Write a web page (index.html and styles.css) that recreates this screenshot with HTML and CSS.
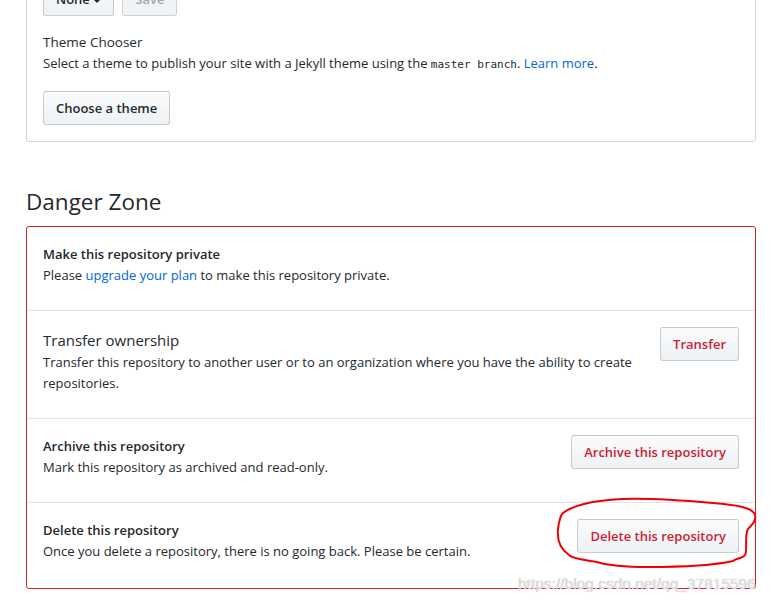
FILE: index.html
```html
<!DOCTYPE html>
<html>
<head>
<meta charset="utf-8">
<link rel="stylesheet" href="styles.css">
</head>
<body>
<div class="page">
  <div class="box">
    <div class="btn-row">
      <button class="btn">None <span class="caret"></span></button>
      <button class="btn btn-disabled">Save</button>
    </div>
    <div class="chooser-title">Theme Chooser</div>
    <p class="chooser-desc">Select a theme to publish your site with a Jekyll theme using the <code>master branch</code>. <a href="#">Learn more</a>.</p>
    <button class="btn btn-theme">Choose a theme</button>
  </div>

  <h2 class="danger-heading">Danger Zone</h2>
  <div class="danger-box">
    <div class="row">
      <div class="row-text">
        <div class="row-title">Make this repository private</div>
        <p class="row-desc">Please <a href="#">upgrade your plan</a> to make this repository private.</p>
      </div>
    </div>
    <div class="row">
      <div class="row-text">
        <div class="row-title row-title-lg">Transfer ownership</div>
        <p class="row-desc">Transfer this repository to another user or to an organization where you have the ability to create repositories.</p>
      </div>
      <button class="btn btn-danger">Transfer</button>
    </div>
    <div class="row">
      <div class="row-text">
        <div class="row-title">Archive this repository</div>
        <p class="row-desc">Mark this repository as archived and read-only.</p>
      </div>
      <button class="btn btn-danger">Archive this repository</button>
    </div>
    <div class="row row-last">
      <div class="row-text">
        <div class="row-title">Delete this repository</div>
        <p class="row-desc">Once you delete a repository, there is no going back. Please be certain.</p>
      </div>
      <button class="btn btn-danger">Delete this repository</button>
      <svg class="scribble" viewBox="547 497 212 74" width="212" height="74">
        <path d="M563 514 C575 505 600 501 623 500 C650 499 690 502 713 504 C735 506 750 508 754 514 C758 520 752 526 748 530 C744 538 748 550 745 556 C742 560 736 559 733 562 C715 566 680 568 647 568 C625 568 607 566 597 563 C585 561 573 560 569 556 C560 550 557 540 558 530 C559 522 560 517 563 514 Z" fill="none" stroke="#f00000" stroke-width="2"/>
      </svg>
    </div>
  </div>
  <div class="watermark">https://blog.csdn.net/qq_37815596</div>
</div>
</body>
</html>
```

FILE: styles.css
```css
html, body {
  margin: 0;
  padding: 0;
  background: #fff;
}
body {
  font-family: "Open Sans", "Noto Sans", sans-serif;
  font-size: 13px;
  line-height: 21px;
  color: #24292e;
  overflow: hidden;
  height: 604px;
}
.page {
  position: relative;
  margin: -35px 16px 0 26px;
}
a {
  color: #0366d6;
  text-decoration: none;
}
p {
  margin: 0;
}
.box {
  border: 1px solid #d1d5da;
  border-radius: 3px;
  padding: 16px;
}
.btn-row {
  display: flex;
  gap: 8px;
}
.btn {
  font-family: "Open Sans", "Noto Sans", sans-serif;
  font-size: 13px;
  font-weight: 600;
  line-height: 20px;
  height: 34px;
  padding: 6px 12px;
  color: #24292e;
  background: linear-gradient(180deg, #fafbfc, #eff3f6 90%);
  border: 1px solid rgba(27, 31, 35, 0.2);
  border-radius: 3px;
  white-space: nowrap;
}
.btn-disabled {
  color: rgba(36, 41, 46, 0.4);
  background: #eff3f6;
  border-color: rgba(27, 31, 35, 0.15);
}
.caret {
  display: inline-block;
  width: 0;
  height: 0;
  vertical-align: middle;
  border-top: 4px solid #24292e;
  border-left: 4px solid transparent;
  border-right: 4px solid transparent;
}
.chooser-title {
  margin-top: 16px;
  font-weight: 400;
  font-size: 13.5px;
}
.chooser-desc code {
  font-family: "DejaVu Sans Mono", monospace;
  font-size: 11px;
}
.btn-theme {
  margin-top: 16px;
  display: block;
}
.danger-heading {
  margin: 45px 0 9px;
  font-size: 22.5px;
  font-weight: 400;
  line-height: 30px;
}
.danger-box {
  border: 1px solid #cb2431;
  border-radius: 3px;
}
.row {
  display: flex;
  align-items: flex-start;
  gap: 20px;
  padding: 17px 16px 24px;
  border-bottom: 1px solid #e1e4e8;
  position: relative;
}
.row-last {
  border-bottom: none;
  padding-bottom: 26px;
}
.row-text {
  flex: 1;
}
.row-title {
  font-weight: 600;
}
.row-title-lg {
  font-size: 15px;
  line-height: 24px;
  font-weight: 400;
}
.btn-danger {
  flex: none;
  margin-top: -1px;
  color: #cb2431;
}
.scribble {
  position: absolute;
  left: 520px;
  top: -7px;
}
.watermark {
  position: absolute;
  left: 492px;
  top: 609px;
  font-family: "Liberation Sans", Arial, sans-serif;
  font-size: 15.5px;
  line-height: 20px;
  color: rgba(232, 232, 232, 0.9);
  text-shadow: 0 0 1px #aaa;
  white-space: nowrap;
}
```
